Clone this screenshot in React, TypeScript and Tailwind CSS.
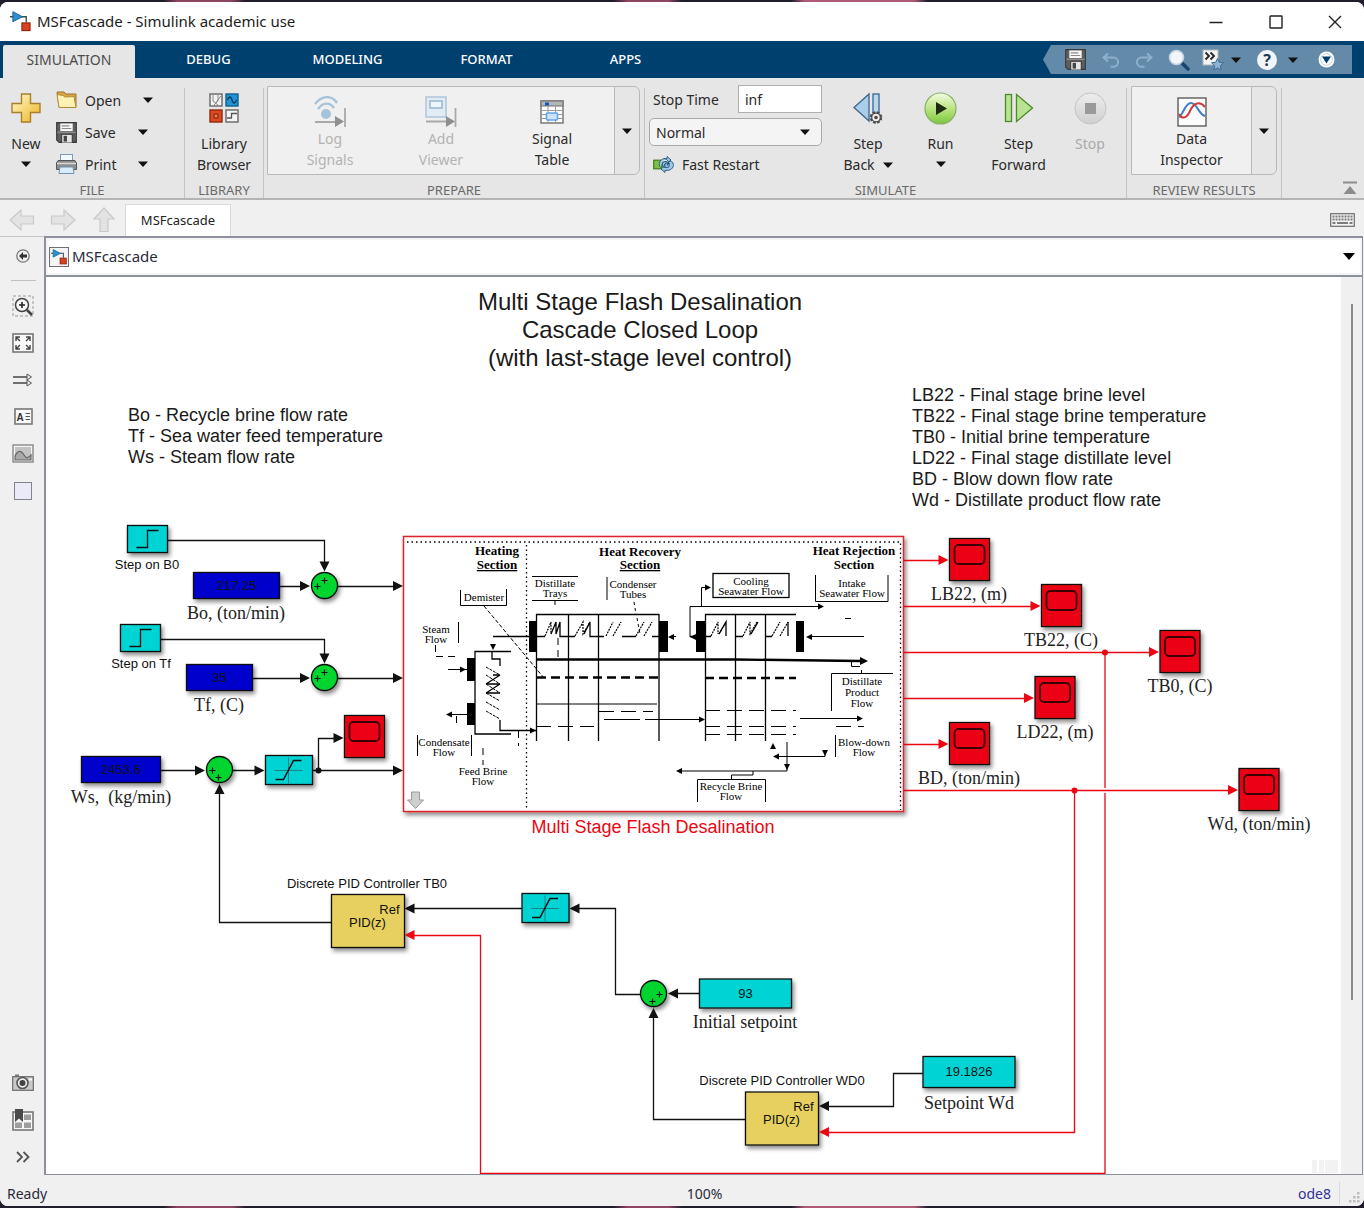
import React from 'react';

const SANS = "font-['Noto_Sans','Open_Sans',sans-serif]";

/* ---------- small shared pieces ---------- */

function Caret({ className = '' }: { className?: string }) {
  return (
    <svg width="10" height="6" viewBox="0 0 10 6" className={className} aria-hidden="true">
      <path d="M0 0.5H10L5 6Z" fill="#111" />
    </svg>
  );
}

function ModelIcon({ size = 22 }: { size?: number }) {
  return (
    <svg width={size} height={size} viewBox="0 0 22 22" aria-hidden="true">
      <path d="M0 6H4M12 6H17V12" stroke="#3a4a55" strokeWidth="1.4" fill="none" />
      <path d="M3 0.8L13 6L3 11.2Z" fill="#2b93cf" stroke="#15618f" strokeWidth="1" />
      <rect x="12.5" y="12.5" width="8.5" height="8" fill="#d8431f" stroke="#8e2409" strokeWidth="1.2" />
    </svg>
  );
}

function FloppyIcon({ size = 22 }: { size?: number }) {
  return (
    <svg width={size} height={size} viewBox="0 0 22 22" aria-hidden="true">
      <path d="M0.7 0.7H21.3V21.3H3.2L0.7 18.8Z" fill="#5d5d5d" stroke="#3a3a3a" strokeWidth="1.2" />
      <rect x="4.5" y="1.5" width="13" height="8" fill="#f7f7f7" />
      <path d="M6 4H14M6 6.8H16" stroke="#8a8a8a" strokeWidth="1.2" />
      <rect x="1.5" y="10" width="19" height="1.6" fill="#8b8b8b" />
      <rect x="5.5" y="12.5" width="12" height="9" fill="#3d3d3d" />
      <rect x="6.5" y="13.5" width="10" height="8" fill="#e4e4e4" />
      <rect x="8" y="14.5" width="3.5" height="6" fill="#444" />
    </svg>
  );
}

function GroupLabel({ children }: { children: React.ReactNode }) {
  return <div className="h-[18px] text-center text-[13px] leading-[20px] text-[#6a6a6a]">{children}</div>;
}

function BigButton({
  icon,
  lines,
  caret,
  disabled,
  className,
}: {
  icon: React.ReactNode;
  lines: string[];
  caret?: 'below' | 'inline';
  disabled?: boolean;
  className: string;
}) {
  return (
    <button
      type="button"
      disabled={disabled}
      className={`flex flex-col items-center pt-2 text-[14px] leading-[21px] ${disabled ? 'text-[#a9a9a9]' : 'text-[#2a2a2a]'} ${className}`}
    >
      <span className="flex h-8 items-center justify-center">{icon}</span>
      <span className="mt-[9px]">{lines[0]}</span>
      {lines[1] && (
        <span className="flex items-center gap-2">
          {lines[1]}
          {caret === 'inline' && <Caret />}
        </span>
      )}
      {caret === 'below' && <Caret className="mt-[7px]" />}
    </button>
  );
}

function GalleryButton({
  icon,
  lines,
  disabled,
  className,
}: {
  icon: React.ReactNode;
  lines: string[];
  disabled?: boolean;
  className: string;
}) {
  return (
    <button
      type="button"
      disabled={disabled}
      className={`flex flex-col items-center pt-2 text-[14px] leading-[21px] ${disabled ? 'text-[#b3b3b3]' : 'text-[#2a2a2a]'} ${className}`}
    >
      <span className="flex h-[33px] items-center justify-center">{icon}</span>
      <span>{lines[0]}</span>
      <span>{lines[1]}</span>
    </button>
  );
}

function FileRow({ icon, label, wide }: { icon: React.ReactNode; label: string; wide?: boolean }) {
  return (
    <div className="flex h-8 items-center text-[14px] text-[#2a2a2a]">
      <button type="button" className="flex items-center gap-2">
        <span className="flex w-[21px] justify-center">{icon}</span>
        <span className={wide ? 'w-[58px] text-left' : 'w-[53px] text-left'}>{label}</span>
      </button>
      <button type="button" aria-label={`${label} options`}>
        <Caret />
      </button>
    </div>
  );
}

function Divider() {
  return <div className="mt-2.5 w-px shrink-0 bg-[#c4c4c4]" />;
}

/* ---------- window chrome ---------- */

function TitleBar() {
  return (
    <header className="flex h-[39px] shrink-0 items-center bg-white pl-[10px]">
      <ModelIcon size={21} />
      <h1 className="ml-1.5 flex-1 text-[15px] text-[#1c1c1c]">MSFcascade - Simulink academic use</h1>
      <div className="flex">
        <button type="button" aria-label="Minimize" className="flex w-[60px] justify-center">
          <svg width="14" height="14" viewBox="0 0 14 14"><path d="M0.5 7.5H13.5" stroke="#222" strokeWidth="1.3" /></svg>
        </button>
        <button type="button" aria-label="Maximize" className="flex w-[60px] justify-center">
          <svg width="14" height="14" viewBox="0 0 14 14"><rect x="1" y="1" width="12" height="12" rx="0.5" fill="none" stroke="#222" strokeWidth="1.4" /></svg>
        </button>
        <button type="button" aria-label="Close" className="flex w-[58px] justify-center">
          <svg width="14" height="14" viewBox="0 0 14 14"><path d="M1 1L13 13M13 1L1 13" stroke="#222" strokeWidth="1.4" /></svg>
        </button>
      </div>
    </header>
  );
}

function QuickAccess() {
  return (
    <div className="mr-3 mt-1 flex h-[29px] w-[309px] items-center bg-[#648aaa] pl-[22px] [clip-path:polygon(8px_0,100%_0,100%_100%,8px_100%,0_50%)]">
      <button type="button" aria-label="Save"><FloppyIcon size={21} /></button>
      <button type="button" aria-label="Undo" className="ml-[15px]">
        <svg width="20" height="18" viewBox="0 0 20 18">
          <path d="M7 2.5L2.5 6.5L7 10.500M2.5 6.5H12.5A4.600 4.600 0 0 1 12.5 15.7H9.5" fill="none" stroke="#8fb0cb" strokeWidth="2" />
        </svg>
      </button>
      <button type="button" aria-label="Redo" className="ml-[13px]">
        <svg width="20" height="18" viewBox="0 0 20 18">
          <path d="M13 2.5L17.5 6.5L13 10.5M17.5 6.5H7.5A4.6 4.6 0 0 0 7.5 15.7H10.5" fill="none" stroke="#8fb0cb" strokeWidth="2" />
        </svg>
      </button>
      <button type="button" aria-label="Search" className="ml-[14px]">
        <svg width="22" height="22" viewBox="0 0 22 22">
          <path d="M13 13L20 20" stroke="#17456f" strokeWidth="3.4" strokeLinecap="round" />
          <circle cx="8.5" cy="8.5" r="7" fill="#f1f6fa" stroke="#c2d2de" strokeWidth="1.6" />
        </svg>
      </button>
      <button type="button" aria-label="Favorites" className="ml-3 flex items-center gap-[7px]">
        <svg width="22" height="22" viewBox="0 0 22 22">
          <rect x="1" y="1" width="15" height="15" fill="#f4f4f4" stroke="#b5b5b5" />
          <path d="M3.5 3.5L7 7L3.5 10.5M8.5 3.5L12 7L8.5 10.5" fill="none" stroke="#222" strokeWidth="1.8" />
          <path d="M15.5 9.5L17.3 13.3L21.5 13.8L18.4 16.7L19.2 21L15.5 18.9L11.8 21L12.6 16.7L9.5 13.8L13.7 13.3Z" fill="#8db4d6" stroke="#3f6c96" />
        </svg>
        <Caret />
      </button>
      <button type="button" aria-label="Help" className="ml-4 flex items-center gap-[11px]">
        <span className="flex size-5 items-center justify-center rounded-full bg-[#f2f5f8] text-[16px] font-bold leading-none text-[#17395a]">?</span>
        <Caret />
      </button>
      <button type="button" aria-label="Customize toolbar" className="ml-5">
        <svg width="17" height="17" viewBox="0 0 17 17">
          <circle cx="8.5" cy="8.5" r="8" fill="#fff" />
          <circle cx="8.5" cy="8.5" r="5.8" fill="none" stroke="#c0d0de" />
          <path d="M4 5.5H13L8.5 12.5Z" fill="#00406f" />
        </svg>
      </button>
    </div>
  );
}

function TabBar() {
  return (
    <nav className="flex h-[37px] shrink-0 bg-[#00406f] pl-[3px] text-[13px] text-white" aria-label="Toolstrip">
      <button type="button" className="mr-1 mt-1 w-[132px] rounded-t-[2px] bg-[#e6e6e6] pb-1 text-[14px] text-[#4c4c4c]">SIMULATION</button>
      {['DEBUG', 'MODELING', 'FORMAT', 'APPS'].map((t) => (
        <button key={t} type="button" className="mt-1 w-[139px] pb-1 font-medium">{t}</button>
      ))}
      <div className="flex-1" />
      <QuickAccess />
    </nav>
  );
}

function Ribbon() {
  return (
    <section className="flex h-[122px] shrink-0 border-b-2 border-[#b4b4b4] bg-[#e6e6e6]">
      <div className="flex w-[184px] flex-col">
        <div className="flex flex-1 pt-1.5">
          <BigButton
            className="w-[52px]"
            caret="below"
            lines={['New']}
            icon={
              <svg width="30" height="30" viewBox="0 0 30 30">
                <defs>
                  <linearGradient id="gold" x1="0" y1="0" x2="1" y2="1">
                    <stop offset="0" stopColor="#fffbd0" />
                    <stop offset="1" stopColor="#efb320" />
                  </linearGradient>
                </defs>
                <path d="M10.5 1H19.5V10.5H29V19.5H19.5V29H10.5V19.5H1V10.5H10.5Z" fill="url(#gold)" stroke="#a97e2c" strokeWidth="1.4" />
              </svg>
            }
          />
          <div className="ml-1 flex flex-col">
            <FileRow
              wide
              label="Open"
              icon={
                <svg width="21" height="18" viewBox="0 0 21 18">
                  <path d="M1 1H8L10 3H20V16H3Z" fill="#d9a441" stroke="#9a7430" />
                  <path d="M1 3.5L7 4.5L9 6L18 5.5L20 16.5H3Z" fill="#fff0b3" stroke="#b58a36" />
                </svg>
              }
            />
            <FileRow label="Save" icon={<FloppyIcon size={21} />} />
            <FileRow
              label="Print"
              icon={
                <svg width="21" height="20" viewBox="0 0 21 20">
                  <rect x="4.5" y="0.5" width="12" height="7" fill="#f2f8ff" stroke="#7f9ab5" />
                  <path d="M2 6.5H19L20.5 9V15.5H0.5V9Z" fill="#8d8d8d" stroke="#555" />
                  <path d="M1 9.5H20" stroke="#d9d9d9" strokeWidth="1.6" />
                  <path d="M4 13H17L18 19.5H3Z" fill="#d8ecfa" stroke="#6f93b3" />
                </svg>
              }
            />
          </div>
        </div>
        <GroupLabel>FILE</GroupLabel>
      </div>
      <Divider />
      <div className="flex w-[78px] flex-col">
        <div className="flex flex-1 pt-1.5">
          <BigButton
            className="w-full"
            lines={['Library', 'Browser']}
            icon={
              <svg width="30" height="30" viewBox="0 0 30 30">
                <rect x="1" y="1" width="12" height="12" fill="#f3f3f3" stroke="#666" strokeWidth="1.4" />
                <path d="M4 2V8L9 12M9 2V8L5 12M12 3L6 11" stroke="#888" fill="none" />
                <rect x="17" y="1" width="12" height="12" fill="#1f93d6" stroke="#11608f" strokeWidth="1.4" />
                <path d="M18.5 7C20 3 22 3 23 7S26 11 27.5 7" stroke="#0b3c5e" strokeWidth="1.3" fill="none" />
                <rect x="1" y="17" width="12" height="12" fill="#db4a22" stroke="#93290b" strokeWidth="1.4" />
                <rect x="5" y="21" width="4" height="4" fill="#f07a50" stroke="#7b1f06" />
                <rect x="17" y="17" width="12" height="12" fill="#f6f6f6" stroke="#666" strokeWidth="1.4" />
                <path d="M18 25H22.5V20.5H28" stroke="#555" strokeWidth="1.3" fill="none" />
              </svg>
            }
          />
        </div>
        <GroupLabel>LIBRARY</GroupLabel>
      </div>
      <Divider />
      <div className="flex w-[380px] flex-col">
        <div className="flex flex-1 pl-[3px] pt-2">
          <div className="flex h-[89px] w-[373px] rounded-r-[6px] border border-[#b9b9b9]">
            <div className="flex flex-1 justify-center bg-[#f0f0f0]">
              <GalleryButton
                disabled
                className="w-[111px]"
                lines={['Log', 'Signals']}
                icon={
                  <svg width="32" height="31" viewBox="0 0 32 31">
                    <path d="M1 8C8 -1 18 -1 23 7M4 13C9 6 16 6 20 12" fill="none" stroke="#a5c4dc" strokeWidth="2.4" />
                    <circle cx="12" cy="18" r="5" fill="#a5c4dc" />
                    <path d="M1 26H22M31 12V31" stroke="#a9a9a9" strokeWidth="1.8" />
                    <path d="M21 20L30 25.5L21 31Z" fill="#8f8f8f" />
                  </svg>
                }
              />
              <GalleryButton
                disabled
                className="w-[111px]"
                lines={['Add', 'Viewer']}
                icon={
                  <svg width="32" height="31" viewBox="0 0 32 31">
                    <rect x="1" y="1" width="20" height="20" fill="#e1ecf5" stroke="#b2c9db" strokeWidth="1.6" />
                    <rect x="5" y="5" width="12" height="7" fill="#eef5fb" stroke="#9dbad1" strokeWidth="1.6" />
                    <path d="M1 25.5H22M30.5 12V31" stroke="#a9a9a9" strokeWidth="1.8" />
                    <path d="M21 20L30 25.5L21 31Z" fill="#8f8f8f" />
                  </svg>
                }
              />
              <GalleryButton
                className="w-[111px]"
                lines={['Signal', 'Table']}
                icon={
                  <svg width="24" height="24" viewBox="0 0 24 24">
                    <rect x="1" y="1" width="22" height="22" fill="#fff" stroke="#6f6f6f" strokeWidth="1.4" />
                    <rect x="1" y="1" width="22" height="5" fill="#b5b5b5" stroke="#6f6f6f" />
                    <rect x="5" y="2.5" width="4" height="3" fill="#0b57c4" />
                    <path d="M1 10.5H23M1 14.5H23M1 18.5H23M8 6V23M15.5 6V23" stroke="#9a9a9a" />
                    <rect x="6.5" y="13" width="11" height="7" rx="1" fill="#cfe4fb" stroke="#5fa3ea" strokeWidth="1.6" />
                  </svg>
                }
              />
            </div>
            <button type="button" aria-label="More signal tools" className="flex w-[25px] items-center justify-center border-l border-[#b9b9b9]"><Caret /></button>
          </div>
        </div>
        <GroupLabel>PREPARE</GroupLabel>
      </div>
      <Divider />
      <div className="flex w-[481px] flex-col">
        <div className="flex flex-1">
          <div className="ml-1 flex w-[173px] flex-col pt-[7px] text-[14px] text-[#2a2a2a]">
            <div className="flex items-center justify-between pl-1">
              <label htmlFor="stop-time">Stop Time</label>
              <input
                id="stop-time"
                defaultValue="inf"
                className="h-7 w-[84px] border border-[#b0b0b0] bg-white px-1.5 text-[14px] outline-none"
              />
            </div>
            <div className="relative mt-[5px]">
              <select
                aria-label="Simulation mode"
                className="h-7 w-full appearance-none rounded-[5px] border border-[#a9a9a9] bg-[#f4f4f4] px-1.5 text-[14px] outline-none"
              >
                <option>Normal</option>
              </select>
              <Caret className="pointer-events-none absolute right-3 top-[11px]" />
            </div>
            <button type="button" className="mt-2 flex h-[21px] items-center gap-2 pl-1">
              <svg width="21" height="17" viewBox="0 0 21 17">
                <rect x="0.7" y="4.2" width="8" height="8.6" fill="#7bc143" stroke="#3f7d1b" strokeWidth="1.2" />
                <path d="M11 2.7H14V0.5L18 4L14 7.5V5.6H11.500A3 3 0 0 0 11.500 11.400H12V9.5L8 13L12 16.5V14.3H15.500C22 13 21.5 5.500 17 4.900L14 7.500V5.600H11.500A3 3 0 0 0 11.5 11.4H15.500A5.800 5.800 0 0 0 11 2.700A5.500 5.500 0 0 0 7.500 11.500" fill="#9cc7e8" stroke="#2f5e85" />
                <path d="M11 9.5L13 7M14 9.5L16 7" stroke="#1d4567" strokeWidth="1.2" />
              </svg>
              Fast Restart
            </button>
          </div>
          <div className="ml-2.5 flex pt-1.5">
            <BigButton
              className="w-[72px]"
              caret="inline"
              lines={['Step', 'Back']}
              icon={
                <svg width="32" height="32" viewBox="0 0 32 32">
                  <path d="M17 2V29L2 15.5Z" fill="#a9cdea" stroke="#3c6489" strokeWidth="1.3" />
                  <rect x="21" y="2" width="6" height="24" fill="#b9d8ef" stroke="#3c6489" strokeWidth="1.3" />
                  <circle cx="24" cy="25.5" r="5.2" fill="#ededed" stroke="#4b4b4b" strokeWidth="2.2" strokeDasharray="2.7 1.4" />
                  <circle cx="24" cy="25.5" r="4.3" fill="#ededed" stroke="#4b4b4b" strokeWidth="1.2" />
                  <circle cx="24" cy="25.5" r="1.8" fill="#4b4b4b" />
                </svg>
              }
            />
            <BigButton
              className="w-[73px]"
              caret="below"
              lines={['Run']}
              icon={
                <svg width="33" height="33" viewBox="0 0 33 33">
                  <defs>
                    <linearGradient id="run" x1="0" y1="0" x2="0" y2="1">
                      <stop offset="0" stopColor="#f2fbe2" />
                      <stop offset="0.5" stopColor="#bbe581" />
                      <stop offset="1" stopColor="#7cc63d" />
                    </linearGradient>
                  </defs>
                  <circle cx="16.5" cy="16.5" r="15.5" fill="url(#run)" stroke="#8cae6a" strokeWidth="1.2" />
                  <path d="M12 10L23 16.5L12 23Z" fill="#1d2a14" />
                </svg>
              }
            />
            <BigButton
              className="w-[83px]"
              lines={['Step', 'Forward']}
              icon={
                <svg width="30" height="30" viewBox="0 0 30 30">
                  <rect x="1.5" y="1.5" width="6" height="27" fill="#b9e292" stroke="#4d8a2c" strokeWidth="1.3" />
                  <path d="M12.5 1.5V28.5L28.5 15Z" fill="#b9e292" stroke="#4d8a2c" strokeWidth="1.3" />
                </svg>
              }
            />
            <BigButton
              disabled
              className="w-[60px]"
              lines={['Stop']}
              icon={
                <svg width="33" height="33" viewBox="0 0 33 33">
                  <defs>
                    <linearGradient id="stop" x1="0" y1="0" x2="0" y2="1">
                      <stop offset="0" stopColor="#eeeeee" />
                      <stop offset="1" stopColor="#cfcfcf" />
                    </linearGradient>
                  </defs>
                  <circle cx="16.5" cy="16.5" r="15.5" fill="url(#stop)" stroke="#c3c3c3" />
                  <rect x="11" y="11" width="11" height="11" fill="#9a9a9a" />
                </svg>
              }
            />
          </div>
        </div>
        <GroupLabel>SIMULATE</GroupLabel>
      </div>
      <Divider />
      <div className="flex w-[154px] flex-col">
        <div className="flex flex-1 pl-1 pt-2">
          <div className="flex h-[89px] w-[146px] rounded-r-[6px] border border-[#b9b9b9]">
            <GalleryButton
              className="flex-1 bg-[#f0f0f0]"
              lines={['Data', 'Inspector']}
              icon={
                <svg width="30" height="30" viewBox="0 0 30 30">
                  <rect x="1" y="1" width="28" height="28" fill="#fcfcfc" stroke="#5c5c5c" strokeWidth="1.4" />
                  <path d="M2 20C6 18 8 6 14 6S22 18 28 19" fill="none" stroke="#3e7fc4" strokeWidth="2" />
                  <path d="M2 17C5 23 10 21 13 14S22 3 28 10" fill="none" stroke="#d23b3b" strokeWidth="2" />
                </svg>
              }
            />
            <button type="button" aria-label="More review tools" className="flex w-[25px] items-center justify-center border-l border-[#b9b9b9]"><Caret /></button>
          </div>
        </div>
        <GroupLabel>REVIEW RESULTS</GroupLabel>
      </div>
      <Divider />
      <div className="flex flex-1 items-end justify-end pb-[3px] pr-[7px]">
        <button type="button" aria-label="Collapse toolstrip">
          <svg width="14" height="14" viewBox="0 0 14 14">
            <path d="M0 1.5H14" stroke="#8c8c8c" strokeWidth="2" />
            <path d="M7 5L13.5 13H0.5Z" fill="#8c8c8c" />
          </svg>
        </button>
      </div>
    </section>
  );
}

function NavArrow({ label, turn }: { label: string; turn: string }) {
  return (
    <button type="button" aria-label={label} disabled>
      <svg width="26" height="24" viewBox="0 0 26 24" className={turn}>
        <path d="M1 12L12 2V8H24.5V16H12V22Z" fill="#e3e3e3" stroke="#c9c9c9" strokeWidth="1.2" />
      </svg>
    </button>
  );
}

function NavBar() {
  return (
    <div className="flex h-9 shrink-0 items-center bg-[#f0f0f0] pl-[9px] pr-[9px] pt-1">
      <div className="flex gap-[15px]">
        <NavArrow label="Back" turn="" />
        <NavArrow label="Forward" turn="rotate-180" />
        <NavArrow label="Up to parent" turn="rotate-90" />
      </div>
      <button type="button" className="ml-2 h-8 w-[106px] border border-b-0 border-[#dadada] bg-white text-[13px] text-[#222]">MSFcascade</button>
      <div className="flex-1" />
      <button type="button" aria-label="Keyboard shortcuts">
        <svg width="25" height="14" viewBox="0 0 25 14">
          <rect x="0.7" y="0.7" width="23.6" height="12.6" fill="#f3f3f3" stroke="#6c6c6c" strokeWidth="1.2" />
          <path d="M2.5 3.5H22.5M2.5 6.5H22.5" stroke="#7c7c7c" strokeWidth="1.8" strokeDasharray="2 1" />
          <path d="M2.5 10H5.5M7 10H18M19.5 10H22.5" stroke="#7c7c7c" strokeWidth="1.8" />
        </svg>
      </button>
    </div>
  );
}

/* ---------- canvas palette ---------- */

function ToolButton({ label, children }: { label: string; children: React.ReactNode }) {
  return (
    <button type="button" aria-label={label} title={label} className="flex h-[37px] w-full items-center justify-center">
      {children}
    </button>
  );
}

function Sidebar() {
  return (
    <aside className="flex w-11 shrink-0 flex-col border-t border-[#c4c4c4] bg-[#f0f0f0] pl-0.5">
      <ToolButton label="Hide browser">
        <svg width="14" height="14" viewBox="0 0 14 14">
          <circle cx="7" cy="7" r="6.2" fill="none" stroke="#777" strokeWidth="1.3" />
          <path d="M7 3L3 7L7 11V8.5H11V5.5H7Z" fill="#333" />
        </svg>
      </ToolButton>
      <div className="mx-auto my-1.5 h-px w-[25px] shrink-0 bg-[#c0c0c0]" />
      <ToolButton label="Zoom to region">
        <svg width="22" height="22" viewBox="0 0 22 22">
          <rect x="1" y="1" width="20" height="20" fill="none" stroke="#999" strokeDasharray="3 2" />
          <circle cx="10" cy="10" r="6.5" fill="#f7f7f7" stroke="#444" strokeWidth="1.5" />
          <path d="M7 10H13M10 7V13" stroke="#222" strokeWidth="1.6" />
          <path d="M15 15L20 20" stroke="#444" strokeWidth="2.6" />
        </svg>
      </ToolButton>
      <ToolButton label="Fit to view">
        <svg width="22" height="20" viewBox="0 0 22 20">
          <rect x="1" y="1" width="20" height="18" fill="#fafafa" stroke="#777" strokeWidth="1.6" />
          <path d="M4 8V4H8M4.5 4.5L8 8M14 4H18V8M17.5 4.5L14 8M4 12V16H8M4.5 15.5L8 12M18 12V16H14M17.5 15.5L14 12" fill="none" stroke="#444" strokeWidth="1.4" />
        </svg>
      </ToolButton>
      <ToolButton label="Sample time">
        <svg width="20" height="14" viewBox="0 0 20 14">
          <path d="M0 4H16M0 10H16" stroke="#444" strokeWidth="1.4" />
          <path d="M14 1L18.5 4L14 7ZM14 7L18.5 10L14 13Z" fill="#eee" stroke="#555" />
        </svg>
      </ToolButton>
      <ToolButton label="Annotation">
        <svg width="19" height="17" viewBox="0 0 19 17">
          <rect x="1" y="1" width="17" height="15" fill="#fafafa" stroke="#777" strokeWidth="1.6" />
          <text x="2.5" y="12.5" fontSize="10" fontWeight="bold" fill="#333" className="font-['Liberation_Sans',sans-serif]">A</text>
          <path d="M11.5 5.5H16M11.5 8.5H16M11.5 11.5H16" stroke="#555" strokeWidth="1.2" />
        </svg>
      </ToolButton>
      <ToolButton label="Image">
        <svg width="22" height="19" viewBox="0 0 22 19">
          <rect x="1" y="1" width="20" height="17" fill="#f4f4f4" stroke="#888" strokeWidth="1.4" />
          <rect x="3" y="3" width="16" height="13" fill="#c3c3c3" />
          <path d="M3 12C6 6 9 6 12 11S17 13 19 11V16H3Z" fill="#a9a9a9" stroke="#666" strokeWidth="1.2" />
        </svg>
      </ToolButton>
      <ToolButton label="Area">
        <span className="size-[18px] border border-[#82828c] bg-[#eaeaf8]" />
      </ToolButton>
      <div className="flex-1" />
      <ToolButton label="Screenshot">
        <svg width="22" height="17" viewBox="0 0 22 17">
          <rect x="3" y="0.5" width="4" height="3" fill="#777" />
          <rect x="0.7" y="2.7" width="20.6" height="13.6" fill="#c9c9c9" stroke="#6b6b6b" strokeWidth="1.2" />
          <circle cx="10.5" cy="9" r="5.5" fill="#eee" stroke="#555" strokeWidth="1.6" />
          <circle cx="10.5" cy="9" r="3" fill="#444" />
          <rect x="17" y="4.5" width="3" height="2" fill="#fff" />
        </svg>
      </ToolButton>
      <ToolButton label="Model browser">
        <svg width="22" height="22" viewBox="0 0 22 22">
          <rect x="1" y="3" width="20" height="18" fill="#f6f6f6" stroke="#777" strokeWidth="1.6" />
          <rect x="12" y="5.5" width="7" height="5.5" fill="#9d9d9d" />
          <rect x="3" y="13.5" width="7" height="5.5" fill="#9d9d9d" />
          <rect x="12" y="13.5" width="7" height="5.5" fill="#9d9d9d" />
          <path d="M3 0H11V13L7 9.5L3 13Z" fill="#4a4a4a" />
        </svg>
      </ToolButton>
      <ToolButton label="More">
        <svg width="14" height="12" viewBox="0 0 14 12">
          <path d="M1 1L6 6L1 11M7.5 1L12.5 6L7.5 11" fill="none" stroke="#555" strokeWidth="1.8" />
        </svg>
      </ToolButton>
    </aside>
  );
}

/* ---------- block diagram ---------- */

const RED = '#ec0612';
const CYAN = '#00d3d3';
const BLUE = '#0000cd';
const GREEN = '#00d42e';
const GOLD = '#e7d05e';
const INK = '#111';

type Dir = 'r' | 'l' | 'u' | 'd';

function Head({ x, y, dir, color = INK, s = 5 }: { x: number; y: number; dir: Dir; color?: string; s?: number }) {
  const l = s * 2;
  const d = {
    r: `M${x} ${y}L${x - l} ${y - s}V${y + s}Z`,
    l: `M${x} ${y}L${x + l} ${y - s}V${y + s}Z`,
    u: `M${x} ${y}L${x - s} ${y + l}H${x + s}Z`,
    d: `M${x} ${y}L${x - s} ${y - l}H${x + s}Z`,
  }[dir];
  return <path d={d} fill={color} />;
}

function Wire({ d, color = INK }: { d: string; color?: string }) {
  return <path d={d} fill="none" stroke={color} strokeWidth="1.3" />;
}

function Box({ x, y, w, h, fill }: { x: number; y: number; w: number; h: number; fill: string }) {
  return <rect x={x} y={y} width={w} height={h} fill={fill} stroke={INK} strokeWidth="1.3" filter="url(#shadow)" />;
}

function Note({ x, y, lines, size, lead, mid, color = '#1a1a1a' }: { x: number; y: number; lines: string[]; size: number; lead: number; mid?: boolean; color?: string }) {
  return (
    <>
      {lines.map((t, i) => (
        <text key={t} x={x} y={y + i * lead} fontSize={size} fill={color} textAnchor={mid ? 'middle' : 'start'}>{t}</text>
      ))}
    </>
  );
}

function Tag({ x, y, children }: { x: number; y: number; children: string }) {
  return (
    <text x={x} y={y} fontSize="18" fill="#222" textAnchor="middle" className="whitespace-pre font-['Liberation_Serif',serif]">{children}</text>
  );
}

function Small({ x, y, children }: { x: number; y: number; children: string }) {
  return <text x={x} y={y} fontSize="13" fill={INK} textAnchor="middle">{children}</text>;
}

function Constant({ x, y, w, h, fill, value }: { x: number; y: number; w: number; h: number; fill: string; value: string }) {
  return (
    <g>
      <Box x={x} y={y} w={w} h={h} fill={fill} />
      <Small x={x + w / 2} y={y + h / 2 + 4}>{value}</Small>
    </g>
  );
}

function StepBlock({ x, y }: { x: number; y: number }) {
  return (
    <g>
      <Box x={x} y={y} w={40} h={27} fill={CYAN} />
      <path d={`M${x + 9} ${y + 22}h11v-17h11`} fill="none" stroke={INK} strokeWidth="1.3" />
    </g>
  );
}

function Saturation({ x, y }: { x: number; y: number }) {
  return (
    <g>
      <Box x={x} y={y} w={47} h={29} fill={CYAN} />
      <path d={`M${x + 9} ${y + 15}h28M${x + 23} ${y + 2}v26`} stroke="#1d8484" />
      <path d={`M${x + 10} ${y + 24}h8l10 -19h8`} fill="none" stroke={INK} strokeWidth="1.5" />
    </g>
  );
}

function Sum({ x, y, p, q }: { x: number; y: number; p: [number, number]; q: [number, number] }) {
  const plus = ([dx, dy]: [number, number]) => `M${x + dx - 3} ${y + dy}h6M${x + dx} ${y + dy - 3}v6`;
  return (
    <g>
      <circle cx={x} cy={y} r="13" fill={GREEN} stroke={INK} strokeWidth="1.3" filter="url(#shadow)" />
      <path d={plus(p) + plus(q)} stroke={INK} strokeWidth="1.2" />
    </g>
  );
}

function Scope({ x, y }: { x: number; y: number }) {
  return (
    <g>
      <Box x={x} y={y} w={40} h={42} fill={RED} />
      <rect x={x + 5} y={y + 6.5} width="30" height="19" rx="4" fill="none" stroke="#3a0004" strokeWidth="1.8" />
    </g>
  );
}

function Pid({ x, y }: { x: number; y: number }) {
  return (
    <g>
      <Box x={x} y={y} w={73} h={53} fill={GOLD} />
      <text x={x + 68} y={y + 19} fontSize="13" textAnchor="end" fill={INK}>Ref</text>
      <Small x={x + 36} y={y + 32}>PID(z)</Small>
    </g>
  );
}

function Tiny({ x, y, children }: { x: number; y: number; children: string }) {
  return <text x={x} y={y} fontSize="11" textAnchor="middle">{children}</text>;
}

function PlantSchematic() {
  return (
    <g className="font-['Liberation_Serif',serif]" fill="#000">
      <rect x="403.5" y="536.5" width="500" height="275" fill="#fff" stroke="#e0202b" strokeWidth="1.5" filter="url(#shadow)" />
      <g stroke="#000" fill="none">
        <path d="M407 542H900.5V810M526.5 545V809" strokeDasharray="1.5 3" strokeWidth="1.3" />
        <path d="M460.5 590V605.5H506.500V589M458.5 622V643M417.5 735V756M471.5 735V756" />
        <path d="M532 576.5H578M532 600.5H578M607 577V600M555 601V605" />
        <path d="M511 651.5H475V734H511M492 651V659H500V666M500 720V730.5H536" strokeWidth="1.3" />
        <path d="M486 667L500 675M486 675L500 684M486 684L500 693M486 693L500 701M486 702L500 710M486 711L500 719" strokeDasharray="3 1" />
        <path d="M486 684L500 675M486 684H500M486 693L500 684M486 693H500M500 675H493" strokeWidth="1.3" />
        <path d="M448 669.5H467M447 714.5H467" />
        <path d="M435.5 645V656.5H455M456.5 716V725M518.5 731V746M483 748V765M558 638V660" strokeDasharray="7 5" />
        <path d="M484 606L544 678" strokeDasharray="4 2" />
        <path d="M536.5 614V741M568.5 614V741M598.5 614V741M659 614V741M536 614.5H659" strokeWidth="1.3" />
        <path d="M493 636.5H545M551 634L556 622V634L560 622V636.5H575M584 634L590 622V636.500H604M622 636.5H636M652 636.5H659" strokeWidth="1.3" />
        <path d="M545 636L551 622V634M575 636L583 622V634L590 622M606 636L613 622M613 636L621 622M636 636L644 622M644 636L652 622" strokeDasharray="2 1" strokeWidth="1.2" />
        <path d="M634 602L636 614M637 618L640 634" strokeDasharray="3 3" />
        <path d="M536 659.5H735L860 661" strokeWidth="2.4" />
        <path d="M537 677.5H659M705 678H796" strokeWidth="2.6" strokeDasharray="9 5" />
        <path d="M536 704H657M604 719.5H640M645 719.5H700M800 718.5H858" />
        <path d="M599 711.5H653M536 726.5H594M705 710.5H796M705 726.5H796M705 734.5H796M836 726.5H864" strokeDasharray="15 7" />
        <rect x="713" y="573.5" width="76" height="24" strokeWidth="1.3" />
        <path d="M815.5 575V601.5H888V575M690 637V606.5H818M701.5 606V587.5H706" />
        <path d="M690 636.5H711M719 634L726 622V636M735 636.5H743M751 634L758 622M765 636.5H772M788 622V636" strokeWidth="1.3" />
        <path d="M711 636L718 622V634M719 634L726 622M743 636L750 622V636M750 634L757 622M772 636L780 622M780 636L788 622" strokeDasharray="2 1" strokeWidth="1.2" />
        <path d="M705.5 614V741M735.5 614V741M765.5 614V741M705 614.5H796" strokeWidth="1.3" />
        <path d="M811 636.5H864M672 636.5H676M845 618.5H851" />
        <path d="M831.5 711V673.5H893M851.5 662V666.5H860M861.5 670V673M835.5 735V757" />
        <path d="M825 750V756.5H778M787 742V771H682M697.5 802V779.5H765.5V802M731.5 779V775H753V771" />
      </g>
      <rect x="529" y="621" width="8" height="31" />
      <rect x="659" y="621" width="9" height="31" />
      <rect x="696" y="621" width="9" height="31" />
      <rect x="796" y="621" width="8" height="31" />
      <rect x="467" y="658" width="8" height="23" />
      <rect x="467" y="703" width="8" height="22" />
      <Head x={466} y={669.5} dir="r" s={3} color="#000" />
      <Head x={446} y={714.5} dir="l" s={3} color="#000" />
      <Head x={493} y={650} dir="d" s={3} color="#000" />
      <Head x={536} y={730.5} dir="r" s={3} color="#000" />
      <Head x={668} y={637} dir="l" s={3} color="#000" />
      <Head x={690} y={637} dir="l" s={3} color="#000" />
      <Head x={711} y={587.5} dir="r" s={3} color="#000" />
      <Head x={824} y={606.5} dir="r" s={3} color="#000" />
      <Head x={806} y={637} dir="l" s={3} color="#000" />
      <Head x={868} y={661} dir="r" s={4} color="#000" />
      <Head x={705} y={719.5} dir="r" s={3} color="#000" />
      <Head x={863} y={718.5} dir="r" s={3} color="#000" />
      <Head x={773} y={743} dir="u" s={3} color="#000" />
      <Head x={773} y={756.5} dir="l" s={3} color="#000" />
      <Head x={825} y={756} dir="d" s={3} color="#000" />
      <Head x={787} y={770} dir="d" s={3} color="#000" />
      <Head x={676} y={771} dir="l" s={3} color="#000" />
      <g fontSize="13" fontWeight="bold" textAnchor="middle">
        <text x="497" y="555">Heating</text>
        <text x="497" y="569" textDecoration="underline">Section</text>
        <text x="640" y="556">Heat Recovery</text>
        <text x="640" y="569" textDecoration="underline">Section</text>
        <text x="854" y="555">Heat Rejection</text>
        <text x="854" y="569">Section</text>
      </g>
      <Tiny x={484} y={601}>Demister</Tiny>
      <Tiny x={555} y={587}>Distillate</Tiny>
      <Tiny x={555} y={597}>Trays</Tiny>
      <Tiny x={633} y={588}>Condenser</Tiny>
      <Tiny x={633} y={598}>Tubes</Tiny>
      <Tiny x={436} y={633}>Steam</Tiny>
      <Tiny x={436} y={643}>Flow</Tiny>
      <Tiny x={444} y={746}>Condensate</Tiny>
      <Tiny x={444} y={756}>Flow</Tiny>
      <Tiny x={483} y={775}>Feed Brine</Tiny>
      <Tiny x={483} y={785}>Flow</Tiny>
      <Tiny x={751} y={585}>Cooling</Tiny>
      <Tiny x={751} y={595}>Seawater Flow</Tiny>
      <Tiny x={852} y={587}>Intake</Tiny>
      <Tiny x={852} y={597}>Seawater Flow</Tiny>
      <Tiny x={862} y={685}>Distillate</Tiny>
      <Tiny x={862} y={696}>Product</Tiny>
      <Tiny x={862} y={707}>Flow</Tiny>
      <Tiny x={864} y={746}>Blow-down</Tiny>
      <Tiny x={864} y={756}>Flow</Tiny>
      <Tiny x={731} y={790}>Recycle Brine</Tiny>
      <Tiny x={731} y={800}>Flow</Tiny>
      <path d="M411.5 792H419.5V800H423.5L415.5 808.5L407.5 800H411.5Z" fill="#cfcfcf" stroke="#9a9a9a" />
    </g>
  );
}

const SCOPES = [
  { x: 949.5, y: 538, tag: 'LB22, (m)', tx: 969 },
  { x: 1041.5, y: 584, tag: 'TB22, (C)', tx: 1061 },
  { x: 1160, y: 630, tag: 'TB0, (C)', tx: 1180 },
  { x: 1035, y: 676, tag: 'LD22, (m)', tx: 1055 },
  { x: 949.5, y: 722, tag: 'BD, (ton/min)', tx: 969 },
  { x: 1239, y: 768, tag: 'Wd, (ton/min)', tx: 1259 },
];

function Diagram() {
  return (
    <svg width="1295" height="897" viewBox="46 277 1295 897" className="block shrink-0 font-['Liberation_Sans',Arial,sans-serif]">
      <defs>
        <filter id="shadow" x="-20%" y="-20%" width="150%" height="160%">
          <feDropShadow dx="2" dy="3" stdDeviation="2" floodColor="#000" floodOpacity="0.45" />
        </filter>
      </defs>

      <Note mid x={640} y={310} size={24} lead={28} lines={['Multi Stage Flash Desalination', 'Cascade Closed Loop', '(with last-stage level control)']} />
      <Note x={128} y={421} size={18} lead={21} lines={['Bo - Recycle brine flow rate', 'Tf - Sea water feed temperature', 'Ws - Steam flow rate']} />
      <Note
        x={912}
        y={401}
        size={18}
        lead={21}
        lines={[
          'LB22 - Final stage brine level',
          'TB22 - Final stage brine temperature',
          'TB0 - Initial brine temperature',
          'LD22 - Final stage distillate level',
          'BD - Blow down flow rate',
          'Wd - Distillate product flow rate',
        ]}
      />

      <PlantSchematic />
      <Note mid x={653} y={833} size={18} lead={21} color={RED} lines={['Multi Stage Flash Desalination']} />

      {/* feed inputs */}
      <Wire d="M167 540.5H324.5V564M279 586.5H303M338 586.5H396" />
      <Head x={324.5} y={571.5} dir="d" />
      <Head x={310} y={586} dir="r" />
      <Head x={403} y={586} dir="r" />
      <Wire d="M161 639.5H324.5V656M253 678.5H303M338 678.5H396" />
      <Head x={324.5} y={663.5} dir="d" />
      <Head x={310} y={678} dir="r" />
      <Head x={403} y={678} dir="r" />
      <Wire d="M161 770.5H199M233 770.5H258M312 770.5H396M318.5 770V738.5H337" />
      <Head x={205} y={770.5} dir="r" />
      <Head x={264.5} y={770.5} dir="r" />
      <Head x={403} y={770.5} dir="r" />
      <Head x={343.5} y={738} dir="r" />
      <circle cx="318.5" cy="770.5" r="3" fill={INK} />

      <StepBlock x={127.5} y={525.5} />
      <Small x={147} y={569}>Step on B0</Small>
      <Constant x={193.5} y={572.5} w={86} h={26} fill={BLUE} value="217.25" />
      <Tag x={236} y={619}>Bo, (ton/min)</Tag>
      <Sum x={324.5} y={585.5} p={[0, -5]} q={[-7, 1]} />

      <StepBlock x={120.5} y={624.5} />
      <Small x={141} y={668}>Step on Tf</Small>
      <Constant x={186.5} y={664.5} w={66} h={26} fill={BLUE} value="35" />
      <Tag x={219} y={711}>Tf, (C)</Tag>
      <Sum x={324.5} y={677.5} p={[0, -5]} q={[-7, 1]} />

      <Constant x={81.5} y={756.5} w={79} h={26} fill={BLUE} value="2453.6" />
      <Tag x={121} y={803}>{'Ws,  (kg/min)'}</Tag>
      <Sum x={219.5} y={769.5} p={[-7, 1]} q={[-1, 8]} />
      <Saturation x={265.5} y={755.5} />
      <Scope x={344.5} y={715.5} />

      {/* measured outputs */}
      {SCOPES.map((s) => (
        <g key={s.tag}>
          <Wire color={RED} d={`M904 ${s.y + 22.5}H${s.x - 8}`} />
          <Head color={RED} x={s.x - 1} y={s.y + 22} dir="r" />
          <Scope x={s.x} y={s.y + 0.5} />
          <Tag x={s.tx} y={s.y + 62}>{s.tag}</Tag>
        </g>
      ))}
      <Wire color={RED} d="M1105 652V788M1105 793V1173.5H480.5V935.5H414" />
      <Wire color={RED} d="M1074.5 790V1132.5H828" />
      <circle cx="1105" cy="652.5" r="3" fill={RED} />
      <circle cx="1074.5" cy="790.5" r="3" fill={RED} />

      {/* cascade loop */}
      <Wire d="M331 922.5H219.5V792" />
      <Head x={219.5} y={784} dir="u" />
      <Pid x={331.5} y={894.5} />
      <Small x={367} y={888}>Discrete PID Controller TB0</Small>
      <Head x={404.5} y={908.5} dir="l" />
      <Head x={404.5} y={935} dir="l" color={RED} />
      <Wire d="M522 908.5H412M640 994.5H615.5V908.5H578M699 993.5H674M653.5 1016V1119.5H745" />
      <Head x={569.5} y={908.5} dir="l" />
      <Saturation x={522} y={893.5} />
      <Head x={668} y={993.5} dir="l" />
      <Sum x={653.5} y={993.5} p={[6, 1]} q={[-1, 8]} />
      <Head x={653.5} y={1008} dir="u" />
      <Constant x={699.5} y={979} w={92} h={29} fill={CYAN} value="93" />
      <Tag x={745} y={1028}>Initial setpoint</Tag>

      <Pid x={745.5} y={1092} />
      <Small x={782} y={1085}>Discrete PID Controller WD0</Small>
      <Wire d="M923 1073.5H893.5V1106.5H826" />
      <Head x={819} y={1106} dir="l" />
      <Head x={819} y={1132} dir="l" color={RED} />
      <Constant x={923} y={1056.5} w={92} h={31} fill={CYAN} value="19.1826" />
      <Tag x={969} y={1109}>Setpoint Wd</Tag>

      <path d="M1312 1160h5v13h-5zM1319 1160h5v13h-5zM1325 1160h13v13h-13z" fill="#f2f2f2" />
    </svg>
  );
}

function StatusBar() {
  return (
    <footer className="grid h-[31px] shrink-0 grid-cols-[38px_1fr_auto_1fr] items-center bg-[#f0f0f0] pl-[7px] text-[14px] text-[#2b2b3a]">
      <span className="col-span-2 pt-1.5">Ready</span>
      <span className="pt-1.5">100%</span>
      <span className="flex items-end justify-end">
        <a href="#solver" className="pt-1.5 text-[#33339a]">ode8</a>
        <span className="ml-2 h-[22px] w-px bg-[#d8d8d8]" />
        <svg width="20" height="14" viewBox="0 0 20 14" className="ml-1">
          <path d="M13 2h2.500v2.500h-2.500zM9 6h2.500v2.500h-2.500zM13 6h2.500v2.500h-2.500zM5 10h2.500v2.500h-2.500zM9 10h2.500v2.500h-2.500zM13 10h2.500v2.500h-2.500z" fill="#bdbdbd" />
        </svg>
      </span>
    </footer>
  );
}

export default function App() {
  return (
    <div
      className={`flex h-screen flex-col overflow-hidden bg-[#211d2c] bg-[linear-gradient(90deg,transparent_12%,#8f4562_13%,#8f4562_17%,transparent_18%,transparent_45%,#8f4562_46%,#8f4562_49%,transparent_50%,transparent_58%,#b05a76_59%,#b05a76_67%,transparent_68%)] py-0.5 ${SANS}`}
    >
      <div className="flex min-h-0 flex-1 flex-col overflow-hidden rounded-[8px] bg-white">
        <TitleBar />
        <TabBar />
        <Ribbon />
        <NavBar />
        <main className="flex min-h-0 flex-1 bg-[#f0f0f0] pr-px">
          <Sidebar />
          <div className="flex min-w-0 flex-1 flex-col border-2 border-r border-b border-[#8d919c]">
            <div className="flex h-[37px] shrink-0 items-center border-2 border-[#f5f5f5] bg-white pl-px pr-[5px]">
              <span className="flex size-5 items-center justify-center border border-[#6f6f6f] bg-[#f4f4f4]">
                <ModelIcon size={16} />
              </span>
              <span className="ml-[3px] flex-1 text-[15px] text-[#2b2b3a]">MSFcascade</span>
              <button type="button" aria-label="Model path">
                <svg width="12" height="7" viewBox="0 0 12 7"><path d="M0 0H12L6 7Z" fill="#000" /></svg>
              </button>
            </div>
            <div className="flex min-h-0 flex-1 border-t-2 border-[#8d919c] bg-white">
              <div className="min-w-0 flex-1 overflow-hidden">
                <Diagram />
              </div>
              <div className="flex w-[21px] shrink-0 justify-center bg-[#f0f0f0] pt-[27px]">
                <div className="h-4/5 w-0.5 bg-[#8a8a8a]" />
              </div>
            </div>
          </div>
        </main>
        <StatusBar />
      </div>
    </div>
  );
}
